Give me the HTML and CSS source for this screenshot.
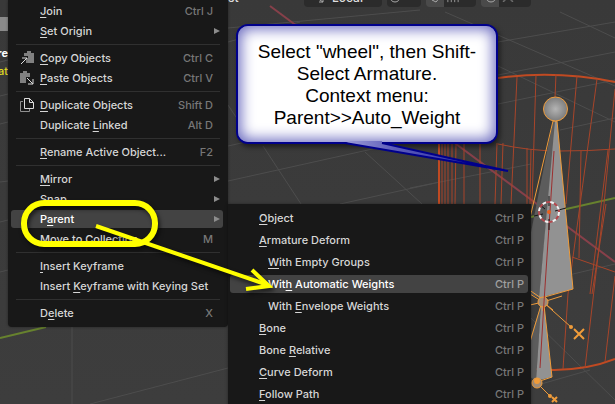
FILE: index.html
```html
<!DOCTYPE html>
<html lang="en">
<head>
    <meta charset="UTF-8">
    <meta name="viewport" content="width=device-width, initial-scale=1.0">
    <title>Parent with Automatic Weights</title>
    <link rel="stylesheet" href="styles.css">
</head>
<body>
    <main class="viewport">
        <!-- 3D scene -->
        <svg class="scene" viewBox="0 0 615 404" preserveAspectRatio="xMinYMin slice" aria-hidden="true">
            <defs>
                <radialGradient id="ball">
                    <stop offset="0" stop-color="#b4b4b4"/>
                    <stop offset="1" stop-color="#7c7c7c"/>
                </radialGradient>
            </defs>
            <g class="grid">
                <path d="M72 327V404M90 404L228 368M0 62L8 60M0 96L8 94M0 124L8 122M0 182L8 181M0 222L8 220M0 272L8 270"/>
                <path d="M263 146L301 204M365 152L422 204M228 181L440 134M228 146L300 130M340 204L440 182M228 105L238 120M228 28L420 10M228 42L300 22"/>
                <path d="M445 12L615 86M560 12L615 38M498 42L615 22M498 75L615 52M498 104L615 80M410 188L531 164M498 66L615 122M560 130L615 118M531 318L615 400M541 384L590 370M531 284L615 264"/>
            </g>
            <path class="axis-x" d="M270 6L615 262"/>
            <path class="axis-y" d="M0 338L46 327M531 217L615 198"/>
            <g class="wheel">
                <path class="thick" d="M498 78Q556 70 615 82M439 144V204M535 369Q580 373 615 359"/>
                <path d="M498 144Q530 151 560 151T615 149M572 257L615 272"/>
                <path d="M442 144V204M445 144V204M448 144V204M452 144V204M456 144L455 204M464 144V204M480 143V204M497 143L495 204M503 143L501 204M527 148V204M531 150L530 204"/>
                <path d="M517 77L511 204M536 75L532 204M556 74L555 98M577 76L566 204M597 79L568 294L563 369M615 89L604 204L585 368M581 151L579 258M608 150L590 294M606 204L592 294M615 276L605 362"/>
            </g>
            <g class="bones">
                <path class="dark" d="M553 121H556L539 298L520 288Z"/>
                <path class="light" d="M555 121H557L573 289L539 298Z"/>
                <path class="outline" d="M520 260L553 121H557L573 289L541 298L525 287"/>
                <path class="dark" d="M541 305L520 370L536 381Z"/>
                <path class="light" d="M541 305H544L552 377L536 381Z"/>
                <path class="outline" d="M530 342L541 305H544L552 377L540 381"/>
                <circle class="joint-ball" cx="555.5" cy="109" r="12"/>
                <path class="outline" d="M543 302L530 294M543 302L530 305M543 302L562 296M543 302L553 310M543 302V311M543 302L571 327M537 383L551 397"/>
                <path class="outline cross" d="M574 329L584 339M584 329L574 339M552 397L557 402M557 397L552 402"/>
                <circle class="joint" cx="543" cy="302" r="5"/>
                <circle class="joint" cx="537" cy="383" r="5"/>
                <circle class="dot" cx="537" cy="381" r="3"/>
                <circle class="dot" cx="571" cy="327" r="2"/>
                <circle class="dot" cx="550" cy="396" r="2"/>
            </g>
            <path class="center-line" d="M554 151L544 302L540 368"/>
            <g class="cursor">
                <path d="M549 196V206M549 219V230M534 216L543 214M555 211L566 208M540 205L545 209"/>
                <circle class="ring-white" cx="549" cy="212" r="10"/>
                <circle class="ring-red" cx="549" cy="212" r="10"/>
                <circle class="origin" cx="549" cy="212" r="2"/>
            </g>
        </svg>

        <header class="toolbar">
            <span class="mode">st</span>
            <button class="tool orientation" type="button">
                <svg viewBox="0 0 10 12" aria-hidden="true"><path d="M2 1v6l6 4M8 7v4H4"/></svg>
                Local
                <svg class="chevron" viewBox="0 0 8 12" aria-hidden="true"><path d="M1 4l3 3 3-3"/></svg>
            </button>
            <button class="tool pivot" type="button" aria-label="Pivot point">
                <svg viewBox="0 0 12 12" aria-hidden="true"><circle cx="6" cy="6" r="5"/><circle cx="6" cy="6" r="1"/></svg>
                <svg class="chevron" viewBox="0 0 8 12" aria-hidden="true"><path d="M1 4l3 3 3-3"/></svg>
            </button>
            <button class="tool snap" type="button" aria-label="Snap">
                <svg viewBox="0 0 12 12" aria-hidden="true"><path d="M2 9l6-7M6 11l5-6M2 9l4 2"/></svg>
                <svg viewBox="0 0 14 12" aria-hidden="true"><path d="M1 7v5M5 7v5M9 7v5M13 7v5M1 8h12"/></svg>
                <svg class="chevron" viewBox="0 0 8 12" aria-hidden="true"><path d="M1 4l3 3 3-3"/></svg>
            </button>
            <button class="tool falloff" type="button" aria-label="Proportional editing">
                <svg viewBox="0 0 12 12" aria-hidden="true"><circle cx="6" cy="6" r="5"/></svg>
                <svg viewBox="0 0 14 12" aria-hidden="true"><path d="M1 11q4 0 5-7M8 4q1 7 5 7"/></svg>
                <svg class="chevron" viewBox="0 0 8 12" aria-hidden="true"><path d="M1 4l3 3 3-3"/></svg>
            </button>
        </header>

        <aside class="info">
            <span class="info-icon"></span>
            <span class="info-view">re</span>
            <span class="info-object">at</span>
        </aside>

        <nav class="menu context-menu" aria-label="Object context menu">
            <button class="item" type="button"><span><u>J</u>oin</span><kbd>Ctrl J</kbd></button>
            <button class="item" type="button"><span><u>S</u>et Origin</span><i class="arrow"></i></button>
            <hr>
            <button class="item" type="button">
                <svg class="icon" viewBox="0 0 16 16" aria-hidden="true"><path class="board" d="M5 3h3V1h4v2h3v10H9V6H5z"/><path d="M2 14l6-6M3 8h5v5"/></svg>
                <span><u>C</u>opy Objects</span><kbd>Ctrl C</kbd>
            </button>
            <button class="item" type="button">
                <svg class="icon" viewBox="0 0 16 16" aria-hidden="true"><path class="board" d="M1 3h3V1h4v2h3v4H7v6H1z"/><path d="M8 8l6 6M14 9v5H9"/></svg>
                <span><u>P</u>aste Objects</span><kbd>Ctrl V</kbd>
            </button>
            <hr>
            <button class="item" type="button">
                <svg class="icon" viewBox="0 0 16 16" aria-hidden="true"><path class="back" d="M4 4.5H1.500V14.500H10.500V12"/><path d="M5.500 1.500h5l4 4v6h-9zM10.500 1.500v4h4"/></svg>
                <span><u>D</u>uplicate Objects</span><kbd>Shift D</kbd>
            </button>
            <button class="item" type="button"><span>Duplicate <u>L</u>inked</span><kbd>Alt D</kbd></button>
            <hr>
            <button class="item" type="button"><span><u>R</u>ename Active Object...</span><kbd>F2</kbd></button>
            <hr>
            <button class="item" type="button"><span><u>M</u>irror</span><i class="arrow"></i></button>
            <button class="item" type="button"><span>S<u>n</u>ap</span><i class="arrow"></i></button>
            <button class="item active" type="button"><span>P<u>a</u>rent</span><i class="arrow"></i></button>
            <button class="item" type="button"><span>Mo<u>v</u>e to Collection</span><kbd>M</kbd></button>
            <hr>
            <button class="item" type="button"><span><u>I</u>nsert Keyframe</span></button>
            <button class="item" type="button"><span>Insert <u>K</u>eyframe with Keying Set</span></button>
            <hr>
            <button class="item" type="button"><span>D<u>e</u>lete</span><kbd>X</kbd></button>
        </nav>

        <nav class="menu submenu" aria-label="Parent">
            <button class="item" type="button"><span><u>O</u>bject</span><kbd>Ctrl P</kbd></button>
            <button class="item" type="button"><span><u>A</u>rmature Deform</span><kbd>Ctrl P</kbd></button>
            <button class="item nested" type="button"><span><u>W</u>ith Empty Groups</span><kbd>Ctrl P</kbd></button>
            <button class="item nested active" type="button"><span>Wit<u>h</u> Automatic Weights</span><kbd>Ctrl P</kbd></button>
            <button class="item nested" type="button"><span>With <u>E</u>nvelope Weights</span><kbd>Ctrl P</kbd></button>
            <button class="item" type="button"><span><u>B</u>one</span><kbd>Ctrl P</kbd></button>
            <button class="item" type="button"><span>Bone <u>R</u>elative</span><kbd>Ctrl P</kbd></button>
            <button class="item" type="button"><span><u>C</u>urve Deform</span><kbd>Ctrl P</kbd></button>
            <button class="item" type="button"><span><u>F</u>ollow Path</span><kbd>Ctrl P</kbd></button>
        </nav>

        <p class="callout">Select "wheel", then Shift-<br>Select Armature.<br>Context menu:<br>Parent&gt;&gt;Auto_Weight</p>

        <!-- callout tail, ring and arrow -->
        <svg class="marks" viewBox="0 0 615 404" preserveAspectRatio="xMinYMin slice" aria-hidden="true">
            <defs>
                <linearGradient id="tail" x1="0" y1="0" x2="1" y2="0">
                    <stop offset="0" stop-color="#9c9cd6"/>
                    <stop offset="0.3" stop-color="#5c5cba"/>
                    <stop offset="1" stop-color="#1c1ca0"/>
                </linearGradient>
            </defs>
            <path class="tail" d="M350 141L346 143L508 171L382 143V141Z"/>
            <path class="tail-edge" d="M345 143L508 171L382 143"/>
            <g class="marker">
                <rect x="24" y="203" width="131" height="41" rx="20"/>
                <path class="shaft" d="M96 226L268 285"/>
                <path class="head" d="M252 270L269 286L246 289"/>
            </g>
        </svg>
    </main>
</body>
</html>
```

FILE: styles.css
```css
* {
    box-sizing: border-box;
}

body {
    margin: 0;
    background: #3b3b3b;
    font-family: Inter, "Noto Sans", sans-serif;
    font-size: 11px;
    font-weight: 500;
    color: #dedede;
}

.viewport {
    position: relative;
    height: 100vh;
    overflow: hidden;
    background: linear-gradient(#393939, #3d3d3d);
}

.scene, .marks {
    position: absolute;
    top: 0;
    left: 0;
    width: 100%;
    height: 100%;
    fill: none;
    pointer-events: none;
}

/* scene */
.grid {
    stroke: #4d4d4d;
}

.axis-x {
    stroke: #87404a;
    stroke-width: 2;
}

.axis-y {
    stroke: #67822e;
    stroke-width: 2;
}

.wheel {
    stroke: #a8452a;
}

.wheel .thick {
    stroke: #c04a22;
    stroke-width: 2;
}

.dark {
    fill: #5c5c5c;
}

.light {
    fill: #929292;
}

.outline {
    stroke: #f09c3a;
}

.cross {
    stroke-width: 2;
}

.joint-ball {
    fill: url(#ball);
    stroke: #f09c3a;
}

.joint {
    fill: #a08c78;
    stroke: #f09c3a;
}

.dot {
    fill: #f09c3a;
}

.center-line {
    stroke: #9c2f2f;
}

.cursor {
    stroke: #161616;
}

.ring-white, .ring-red {
    stroke: #f2f2f2;
    stroke-width: 2;
    stroke-dasharray: 4 4;
}

.ring-red {
    stroke: #b5474d;
    stroke-dashoffset: 4;
}

.origin {
    fill: #e8601c;
    stroke: none;
}

/* header strip, only its lower edge is in view */
.toolbar {
    position: absolute;
    top: 0;
    left: 228px;
    display: flex;
    align-items: flex-end;
    gap: 5px;
    height: 7px;
    font-size: 12px;
}

.mode {
    width: 71px;
    line-height: 18px;
}

.tool {
    display: flex;
    align-items: center;
    justify-content: space-between;
    height: 20px;
    padding: 0 5px 0 10px;
    border: 0;
    border-radius: 4px;
    background: #2b2b2b;
    color: #dedede;
    font: inherit;
}

.tool svg {
    width: 12px;
    height: 12px;
    fill: none;
    stroke: #a8a8a8;
}

.tool .chevron {
    width: 8px;
}

.orientation {
    width: 78px;
}

.pivot {
    width: 34px;
    padding: 0 2px;
}

.snap, .falloff {
    width: 50px;
    padding: 0 4px;
    background: linear-gradient(90deg, #4a4a4a 18px, #2b2b2b 18px);
}

/* left edge text */
.info {
    display: flex;
    flex-direction: column;
    align-items: flex-end;
    width: 8px;
    padding-top: 17px;
    line-height: 18px;
}

.info-icon {
    width: 8px;
    height: 14px;
    margin-bottom: 13px;
    background: #8a8a8a;
}

.info-view {
    color: #fff;
    font-weight: bold;
}

.info-object {
    color: #e0d822;
}

/* menus */
.menu {
    position: absolute;
    display: flex;
    flex-direction: column;
    background: #181818;
    box-shadow: 0 0 3px rgba(0, 0, 0, 0.4);
}

.context-menu {
    top: 0;
    left: 8px;
    width: 220px;
    gap: 2px;
    padding: 2px 5px 5px 3px;
    border-radius: 0 0 4px 4px;
}

.submenu {
    top: 204px;
    left: 228px;
    width: 303px;
    gap: 4px;
    padding: 5px 3px 5px 2px;
}

.item {
    display: flex;
    align-items: center;
    flex-shrink: 0;
    height: 18px;
    padding: 0 10px 0 29px;
    border: 0;
    border-radius: 3px;
    background: none;
    color: #d6d6d6;
    font: inherit;
    white-space: nowrap;
}

.item.nested {
    padding-left: 38px;
}

.submenu .item {
    padding-right: 4px;
}

.item.active {
    background: #434343;
    color: #fff;
}

.item u {
    text-underline-offset: 2px;
    text-decoration-skip-ink: none;
}

.item kbd {
    margin-left: auto;
    color: #777;
    font: inherit;
}

.item.active kbd {
    color: #a0a0a0;
}

.icon {
    width: 16px;
    height: 16px;
    margin: 0 5px 0 -21px;
    fill: none;
    stroke: #dcdcdc;
}

.icon .board {
    fill: #808080;
    stroke: none;
}

.icon .back {
    stroke: #909090;
}

.arrow {
    margin-left: auto;
    margin-right: -7px;
    border: 3px solid transparent;
    border-left: 6px solid #8c8c8c;
    border-right: 0;
}

hr {
    width: 204px;
    margin: 2px 5px;
    border: 0;
    border-top: 1px solid #303030;
}

/* callout */
.callout {
    position: absolute;
    top: 24px;
    left: 236px;
    width: 262px;
    margin: 0;
    padding: 15px 0 13px;
    border: 2px solid #00008b;
    border-radius: 12px;
    background: #fff;
    box-shadow: inset 0 0 14px 3px #6c6cc0, 2px 3px 5px rgba(0, 0, 0, 0.5);
    color: #000;
    font-family: "Liberation Sans", Arial, sans-serif;
    font-size: 19px;
    font-weight: normal;
    line-height: 22px;
    text-align: center;
}

.tail {
    fill: url(#tail);
}

.tail-edge {
    stroke: #00008b;
    stroke-width: 2;
}

.marker {
    stroke: #ff0;
    stroke-width: 6;
    filter: drop-shadow(2px 3px 2px rgba(0, 0, 0, 0.6));
}

.marker .shaft, .marker .head {
    stroke-width: 4;
}
```
